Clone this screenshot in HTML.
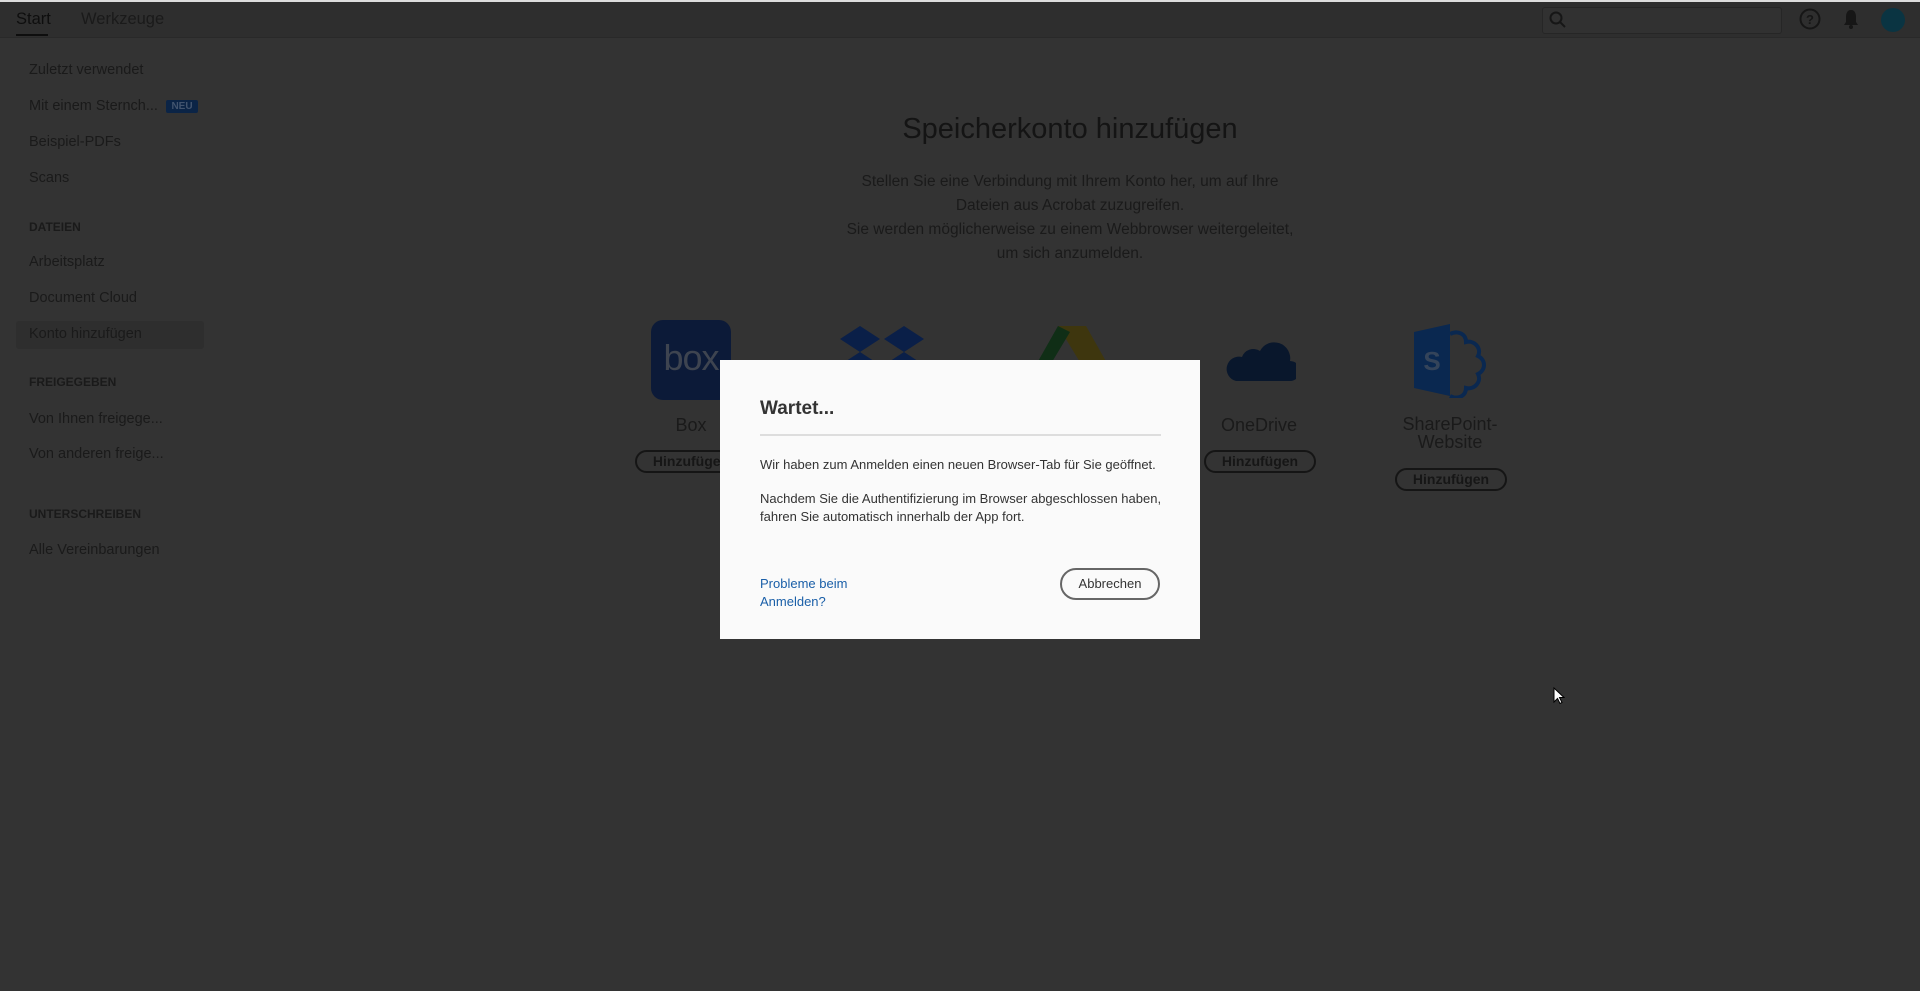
<!DOCTYPE html>
<html><head><meta charset="utf-8"><style>
*{margin:0;padding:0;box-sizing:border-box}
body{width:1920px;height:991px;background:#333;font-family:"Liberation Sans",sans-serif;position:relative;overflow:hidden;color:#1c1c1c}
.a{position:absolute;white-space:nowrap}
.top{position:absolute;left:0;top:0;width:1920px;height:38px;background:#2e2e2e;border-top:2px solid #ddd;border-bottom:1px solid #292929}
.side{font-size:14.5px;color:#1a1a1a}
.hdr{font-size:12px;font-weight:bold;color:#1a1a1a}
.c{transform:translateX(-50%);text-align:center}
.btn{position:absolute;border:2px solid #151515;border-radius:12px;height:23px;width:112px;font-weight:bold;font-size:14px;text-align:center;line-height:19px;color:#161616}
.lab{font-size:18px;color:#1a1a1a}
</style></head><body>
<div class="top"></div>
<div class="a" style="left:16px;top:10px;font-size:16.5px;color:#0e0e0e">Start</div>
<div class="a" style="left:16px;top:34px;width:32px;height:2px;background:#0e0e0e"></div>
<div class="a" style="left:81px;top:10px;font-size:16.5px;color:#1a1a1a">Werkzeuge</div>
<div class="a" style="left:1542px;top:7px;width:240px;height:27px;border:1px solid #262626;border-radius:3px;background:#313131"></div>
<svg class="a" style="left:1548px;top:10px" width="20" height="20" viewBox="0 0 20 20"><circle cx="8" cy="8" r="5.5" fill="none" stroke="#161616" stroke-width="2"/><line x1="12" y1="12" x2="17" y2="17" stroke="#161616" stroke-width="2"/></svg>
<svg class="a" style="left:1799px;top:8px" width="22" height="22" viewBox="0 0 22 22"><circle cx="11" cy="11" r="9.5" fill="none" stroke="#161616" stroke-width="2"/><text x="11" y="16" font-size="13" font-weight="bold" text-anchor="middle" fill="#161616" font-family="Liberation Sans">?</text></svg>
<svg class="a" style="left:1842px;top:8px" width="18" height="22" viewBox="0 0 18 22"><path d="M9 2C5 2 4 6 4 9v5l-2 3h14l-2-3V9c0-3-1-7-5-7z" fill="#161616"/><circle cx="9" cy="19" r="2" fill="#161616"/></svg>
<div class="a" style="left:1881px;top:8px;width:24px;height:24px;border-radius:50%;background:#0a3442"></div>

<div class="a side" style="left:29px;top:62px">Zuletzt verwendet</div>
<div class="a side" style="left:29px;top:98px">Mit einem Sternch...</div>
<div class="a" style="left:166px;top:100px;width:32px;height:13px;background:#0b2446;border-radius:2px;color:#42546e;font-size:10px;font-weight:bold;text-align:center;line-height:13px">NEU</div>
<div class="a side" style="left:29px;top:134px">Beispiel-PDFs</div>
<div class="a side" style="left:29px;top:170px">Scans</div>
<div class="a hdr" style="left:29px;top:220px">DATEIEN</div>
<div class="a side" style="left:29px;top:254px">Arbeitsplatz</div>
<div class="a side" style="left:29px;top:290px">Document Cloud</div>
<div class="a" style="left:16px;top:321px;width:188px;height:28px;background:#2e2e2e;border-radius:3px"></div>
<div class="a side" style="left:29px;top:326px">Konto hinzufügen</div>
<div class="a hdr" style="left:29px;top:375px">FREIGEGEBEN</div>
<div class="a side" style="left:29px;top:411px">Von Ihnen freigege...</div>
<div class="a side" style="left:29px;top:446px">Von anderen freige...</div>
<div class="a hdr" style="left:29px;top:507px">UNTERSCHREIBEN</div>
<div class="a side" style="left:29px;top:542px">Alle Vereinbarungen</div>

<div class="a c" style="left:1070px;top:113px;font-size:29px;color:#141414">Speicherkonto hinzufügen</div>
<div class="a c" style="left:1070px;top:170px;font-size:15.5px;line-height:24px;color:#1a1a1a">Stellen Sie eine Verbindung mit Ihrem Konto her, um auf Ihre<br>Dateien aus Acrobat zuzugreifen.<br>Sie werden möglicherweise zu einem Webbrowser weitergeleitet,<br>um sich anzumelden.</div>

<div class="a" style="left:651px;top:320px;width:80px;height:80px;background:#0c1a38;border-radius:12px;color:#3e4450;font-size:36px;text-align:center;line-height:76px;letter-spacing:-1px">box</div>
<div class="a lab c" style="left:691px;top:415px">Box</div>
<div class="btn" style="left:635px;top:450px">Hinzufügen</div>
<svg class="a" style="left:838px;top:322px" width="90" height="80" viewBox="0 0 90 80"><g fill="#0a1f48"><path d="M22 4l20 13-20 13L2 17z"/><path d="M66 4l20 13-20 13-20-13z"/><path d="M22 30l20 13-20 13L2 43z"/><path d="M66 30l20 13-20 13-20-13z"/></g></svg>
<svg class="a" style="left:1030px;top:322px" width="84" height="60" viewBox="0 0 84 60"><path d="M28 4h28l26 46H56z" fill="#3e360e"/><path d="M28 4L2 50l14 0L40 10z" fill="#102e16"/></svg>
<svg class="a" style="left:1222px;top:335px" width="74" height="48" viewBox="0 0 74 48"><path d="M14 46h54a10 10 0 0 0 0-20 16 16 0 0 0-30-10 12 12 0 0 0-18 6A12 12 0 0 0 14 46z" fill="#09172c"/></svg>
<div class="a lab c" style="left:1259px;top:415px">OneDrive</div>
<div class="btn" style="left:1204px;top:450px">Hinzufügen</div>
<svg class="a" style="left:1410px;top:322px" width="84" height="76" viewBox="0 0 84 76"><path d="M4 10l36-8v72L4 66z" fill="#0a2850"/><path d="M40 12c8-4 16 0 16 8 8-2 16 6 12 14 8 4 8 14 0 18 4 8-4 16-12 14 0 8-8 12-16 8" fill="none" stroke="#0a2850" stroke-width="4"/><text x="22" y="48" font-size="26" font-weight="bold" fill="#34445a" text-anchor="middle" font-family="Liberation Sans">S</text></svg>
<div class="a lab c" style="left:1450px;top:415px;line-height:18px">SharePoint-<br>Website</div>
<div class="btn" style="left:1395px;top:468px">Hinzufügen</div>

<div class="a" style="left:720px;top:360px;width:480px;height:279px;background:#fafafa"></div>
<div class="a" style="left:760px;top:398px;font-size:19px;font-weight:bold;color:#333">Wartet...</div>
<div class="a" style="left:760px;top:434px;width:401px;height:2px;background:#ddd"></div>
<div class="a" style="left:760px;top:456px;font-size:13px;line-height:17px;color:#333">Wir haben zum Anmelden einen neuen Browser-Tab für Sie geöffnet.</div>
<div class="a" style="left:760px;top:490px;font-size:13px;line-height:18px;color:#333">Nachdem Sie die Authentifizierung im Browser abgeschlossen haben,<br>fahren Sie automatisch innerhalb der App fort.</div>
<div class="a" style="left:760px;top:575px;font-size:13px;line-height:18px;color:#1a5fa8">Probleme beim<br>Anmelden?</div>
<div class="a" style="left:1060px;top:568px;width:100px;height:32px;border:2px solid #666;border-radius:16px;font-size:13px;color:#333;text-align:center;line-height:28px">Abbrechen</div>
<svg class="a" style="left:1553px;top:687px" width="12" height="18" viewBox="0 0 12 18"><path d="M1 1v14l3.5-3.5 2.5 5 2-1-2.5-5H11z" fill="#fff" stroke="#000" stroke-width="1"/></svg>
</body></html>
